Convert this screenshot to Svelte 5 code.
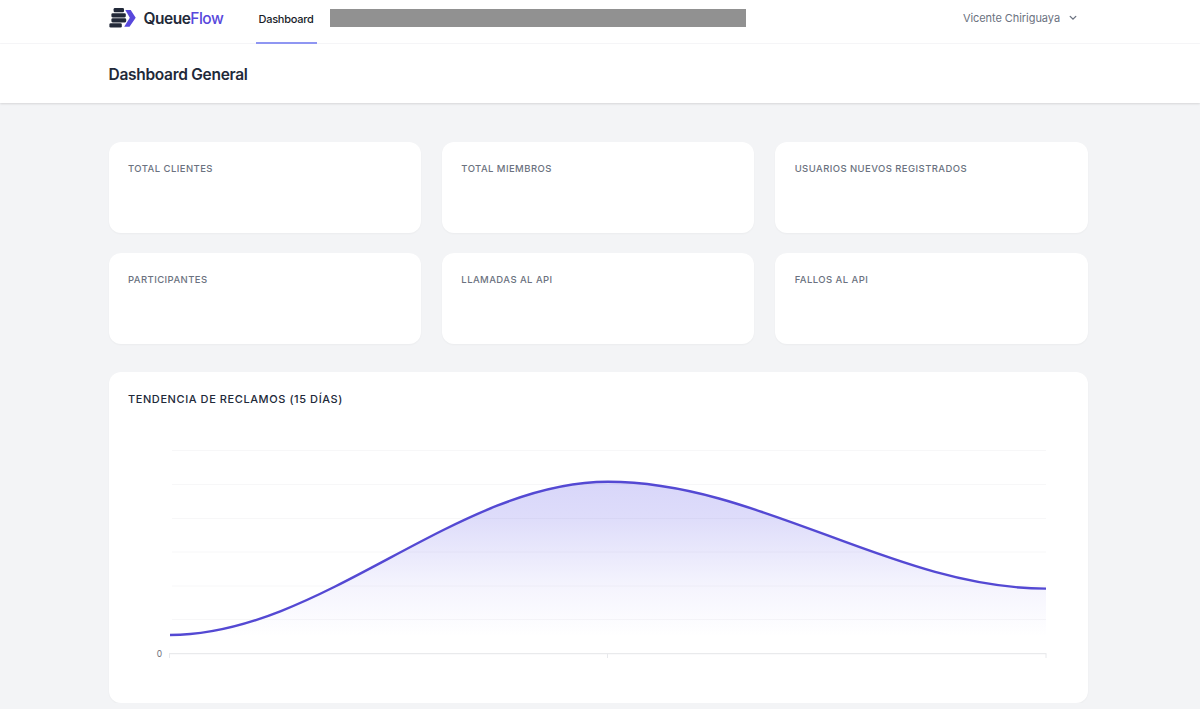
<script lang="ts">
	const stats = [
		'Total clientes',
		'Total miembros',
		'Usuarios nuevos registrados',
		'Participantes',
		'Llamadas al API',
		'Fallos al API'
	];

	const gridLines = [78.5, 112.5, 146.5, 180, 214, 247.5];
	const ticks = [60.5, 498.5, 937];

	const points = [
		{ x: 61, y: 263 },
		{ x: 499, y: 109.8 },
		{ x: 937, y: 216.6 }
	];

	const line = points
		.map((p, i) => {
			if (i === 0) return `M${p.x} ${p.y}`;
			const prev = points[i - 1];
			const d = (p.x - prev.x) * 0.345;
			return `C${prev.x + d} ${prev.y} ${p.x - d} ${p.y} ${p.x} ${p.y}`;
		})
		.join(' ');
	const area = `${line} V282 H61 Z`;
</script>

<nav class="nav">
	<div class="container nav-inner">
		<div class="brand">
			<svg class="logo" width="28" height="22" viewBox="0 0 28 22" aria-hidden="true">
				<path d="M16.3 3h5.4l5 7.8-6.2 8.9h-5.3l5.6-8.9z" fill="#5848dc" />
				<g fill="#222939">
					<rect x="4.6" y="1" width="10.4" height="4.3" rx="1.3" />
					<rect x="2.4" y="6.3" width="14.4" height="4.1" rx="1.3" />
					<rect x="2.4" y="11.3" width="14.8" height="4.1" rx="1.3" />
					<rect x="0.4" y="16.3" width="12.4" height="4.3" rx="1.3" />
				</g>
			</svg>
			<span class="name">Queue<span>Flow</span></span>
		</div>
		<a class="link" href="#dashboard"><span>Dashboard</span></a>
		<div class="redacted"></div>
		<button class="user">
			<span>Vicente Chiriguaya</span>
			<svg width="8" height="6" viewBox="0 0 8 6" aria-hidden="true">
				<path d="M1.2 1.4 4 4.2l2.8-2.8" fill="none" stroke="#6b7280" stroke-width="1.3" stroke-linecap="round" />
			</svg>
		</button>
	</div>
</nav>

<header class="page-header">
	<div class="container">
		<h1>Dashboard General</h1>
	</div>
</header>

<main class="container">
	<section class="stats">
		{#each stats as label (label)}
			<div class="card"><h2>{label}</h2></div>
		{/each}
	</section>

	<section class="panel">
		<h3>Tendencia de reclamos (15 días)</h3>
		<svg class="chart" width="979" height="331" viewBox="0 0 979 331">
			<defs>
				<linearGradient id="fill" gradientUnits="userSpaceOnUse" x1="0" y1="110" x2="0" y2="282">
					<stop offset="0" stop-color="#4f46e5" stop-opacity="0.22" />
					<stop offset="0.2" stop-color="#4f46e5" stop-opacity="0.19" />
					<stop offset="0.6" stop-color="#4f46e5" stop-opacity="0.06" />
					<stop offset="0.9" stop-color="#4f46e5" stop-opacity="0" />
				</linearGradient>
			</defs>
			{#each gridLines as y}
				<line x1="63" x2="937" y1={y} y2={y} stroke="#f7f7f8" />
			{/each}
			<path d={area} fill="url(#fill)" />
			<path d={line} fill="none" stroke="#5449d3" stroke-width="2.4" />
			<line x1="60" x2="937.5" y1="281.7" y2="281.7" stroke="#e4e5e8" />
			{#each ticks as x}
				<line x1={x} x2={x} y1="282" y2="286" stroke="#e8e9ec" />
			{/each}
			<text x="53" y="285" text-anchor="end">0</text>
		</svg>
	</section>
</main>

<style>
	:global(body) {
		background: #f3f4f6;
		font-family: Inter, sans-serif;
		overflow: hidden;
	}

	h1,
	h2,
	h3 {
		margin: 0;
	}

	.container {
		width: 979px;
		margin-left: 108.5px;
	}

	.nav {
		height: 43px;
		background: #fff;
		border-bottom: 1px solid #f7f7f9;
	}

	.nav-inner {
		display: flex;
		height: 44px;
	}

	.brand {
		display: flex;
		align-items: center;
		width: 147px;
		height: 36px;
	}

	.logo {
		flex: none;
		margin: 0 7px 1px 0;
	}

	.name {
		font-size: 15.5px;
		font-weight: 600;
		letter-spacing: -0.5px;
		color: #222939;
	}

	.name span {
		font-weight: 500;
		color: #5848dc;
	}

	.link {
		box-sizing: border-box;
		width: 61px;
		height: 44px;
		border-bottom: 2px solid #8f96f2;
		font-size: 11px;
		font-weight: 500;
		letter-spacing: -0.27px;
		line-height: 38px;
		text-align: center;
		text-decoration: none;
		color: #171c28;
	}

	.redacted {
		width: 416px;
		height: 18px;
		margin: 9px 0 0 13.4px;
		background: #919191;
	}

	.user {
		display: flex;
		align-items: center;
		gap: 8.5px;
		height: 36px;
		margin: 0 11px 0 auto;
		padding: 0;
		border: 0;
		background: none;
		font: 400 11px Inter, sans-serif;
		letter-spacing: -0.06px;
		color: #6b7280;
	}

	.page-header {
		display: flex;
		align-items: center;
		height: 59px;
		background: #fff;
		box-shadow: 0 1px 2px rgb(0 0 0 / 0.12);
	}

	h1 {
		padding-top: 1px;
		font-size: 15.5px;
		font-weight: 600;
		letter-spacing: -0.29px;
		color: #222939;
	}

	.stats {
		display: grid;
		grid-template-columns: repeat(3, 1fr);
		grid-auto-rows: 91px;
		gap: 20px 21px;
		margin-top: 39.4px;
	}

	.card,
	.panel {
		box-sizing: border-box;
		border-radius: 12px;
		background: #fff;
		box-shadow: 0 1px 2px rgb(0 0 0 / 0.035);
	}

	.card {
		padding: 20px 19.5px;
	}

	h2 {
		font-size: 9.5px;
		font-weight: 500;
		line-height: 14px;
		letter-spacing: 0.43px;
		text-transform: uppercase;
		color: #6b7280;
	}

	.panel {
		display: grid;
		height: 331px;
		margin-top: 27.6px;
	}

	.panel > * {
		grid-area: 1 / 1;
	}

	h3 {
		padding: 19px 19.5px;
		font-size: 11px;
		font-weight: 500;
		line-height: 16px;
		letter-spacing: 0.58px;
		text-transform: uppercase;
		color: #222939;
	}

	.chart text {
		font-size: 8.5px;
		fill: #6e7079;
	}
</style>
